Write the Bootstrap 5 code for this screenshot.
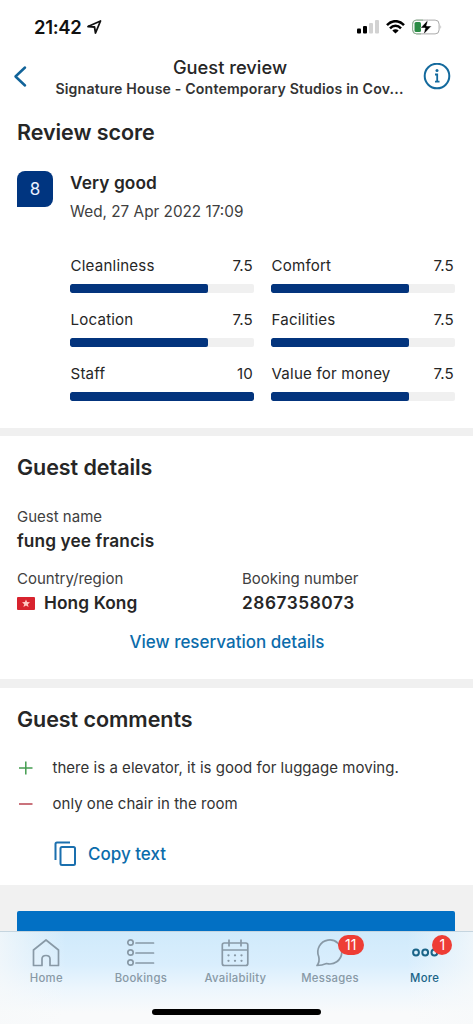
<!DOCTYPE html>
<html lang="en">
<head>
<meta charset="utf-8">
<meta name="viewport" content="width=device-width, initial-scale=1">
<title>Guest review</title>
<link rel="stylesheet" href="https://cdn.jsdelivr.net/npm/bootstrap@5.3.0/dist/css/bootstrap.min.css">
<style>
  body { font-family: Inter, "Liberation Sans", sans-serif; color: #262626; background: #fff; font-size: 15px; line-height: 24px; }
  .screen { height: 1024px; }
  svg { display: block; flex: none; }
  .status { height: 54px; padding: 0 31px 0 34px; color: #111; gap: 7px; }
  .clock { font-size: 18.5px; font-weight: 600; letter-spacing: -.3px; margin-right: -3px; }
  .titlebar { height: 46px; padding: 0 22px 0 13px; }
  .title { font-size: 18.3px; font-weight: 500; line-height: 24px; letter-spacing: 0; padding-left: 1px; }
  .subtitle { font-size: 14.1px; font-weight: 600; line-height: 20px; letter-spacing: .18px; color: #333; }
  .titles { padding-left: 8px; }
  .block { padding: 0 18px 0 17px; }
  .block-score { height: 327.5px; padding-top: 17px; }
  .block-details { height: 243px; padding-top: 16px; }
  .block-comments { height: 197.5px; padding-top: 16px; }
  .heading { font-size: 21.5px; font-weight: 600; line-height: 30px; letter-spacing: -.05px; margin: 0; }
  .score { width: 36px; height: 36px; background: #003580; color: #e8f0ff; border-radius: 8px 8px 8px 0; font-size: 17px; margin-top: 6px; }
  .strong-line { font-size: 17.3px; font-weight: 600; line-height: 26px; letter-spacing: .1px; }
  .date { font-size: 15.3px; line-height: 24px; color: #404040; margin-top: 4px; }
  .scores { margin: 30px 0 0 53px; display: grid; grid-template-columns: 184px 184px; column-gap: 17px; }
  .score-item { height: 54.2px; }
  .score-item .progress { height: 9px; border-radius: 2px; background: #f0f0f0; margin-top: 6px; }
  .score-item .progress-bar { background: #03347d; border-radius: 2px; }
  .score-label { font-size: 15.1px; line-height: 24px; letter-spacing: .2px; padding: 0 1px 0 .5px; }
  .divider { height: 8.5px; background: #f0f0f0; }
  .field { font-size: 15px; line-height: 22px; color: #404040; }
  .booking-no { letter-spacing: .55px; }
  .action { color: #0b6cab; font-weight: 500; text-decoration: none; font-size: 17px; line-height: 26px; }
  .comment { font-size: 15px; line-height: 24px; letter-spacing: .03px; color: #333; gap: 18.5px; }
  .footer-area { height: 139px; background: #f1f1f1; padding-top: 26px; }
  .primary-bar { height: 20px; margin: 0 18px 0 17px; border-radius: 2px 2px 0 0; background: #0270c4; }
  .tabs { height: 93px; border-top: 1px solid #c5d5df; background:
    linear-gradient(90deg, rgba(247,249,250,.75), rgba(247,249,250,0) 14%, rgba(247,249,250,0) 86%, rgba(247,249,250,.75)),
    linear-gradient(#d0eafb, #d9eefd 35%, #edf6fd 62%, #f9fafb 88%); }
  .tab { width: 94.6px; padding-top: 6px; color: #8899a6; font-size: 11.3px; font-weight: 500; line-height: 16px; letter-spacing: .3px; text-align: center; }
  .tab svg { margin: 0 auto 3px; }
  .tab.current { color: #1a6488; }
  .tab-row { margin-left: -1px; }
  .counter { position: absolute; top: 3px; left: 55px; height: 20px; border-radius: 10px; background: #ee3d35; color: #fff; font-size: 14px; line-height: 20px; letter-spacing: 0; font-weight: 400; }
  .home-bar { width: 169px; height: 6px; border-radius: 3px; background: #000; margin: 23px auto 0; }
</style>
</head>
<body>
<div class="screen d-flex flex-column overflow-hidden">
  <div class="status d-flex align-items-center">
    <span class="clock">21:42</span>
    <svg width="17" height="16" viewBox="0 0 17 16" fill="none" stroke="#111" stroke-width="1.8" stroke-linejoin="round"><path d="M2 7.500 14.500 2 9.500 14 8.500 8Z"/></svg>
    <svg class="ms-auto" width="22" height="14" viewBox="0 0 22 14"><rect x="0" y="8.500" width="4" height="5" rx="1"/><rect x="6" y="6" width="4" height="7.500" rx="1"/><rect x="12" y="3" width="4" height="10.500" rx="1" fill="#d2d2d2"/><rect x="18" y="0" width="4" height="13.500" rx="1" fill="#d2d2d2"/></svg>
    <svg width="19" height="14" viewBox="0 0 19 14" fill="none" stroke="#000" stroke-width="2.500"><path d="M1 5.200C6-.2 13-.2 18 5.200M4 8.300c3.200-3.300 7.800-3.300 11 0"/><path d="M9.500 13.500 6.300 10.400c1.900-1.700 4.500-1.700 6.400 0Z" fill="#000" stroke="none"/></svg>
    <svg width="30" height="16" viewBox="0 0 30 16"><rect x=".6" y="1.100" width="26.500" height="13.800" rx="4" fill="#fff" stroke="#aaa"/><path d="M11 1.100H4.600a4 4 0 0 0-4 4v5.800a4 4 0 0 0 4 4H9" fill="none" stroke="#8fb594"/><rect x="2.500" y="3" width="6.500" height="10" rx="1.500" fill="#2c8c46"/><path d="M16 .8 8.500 9h4.700L11.500 15.500 19.500 7h-5Z" fill="#000" stroke="#fff" stroke-width=".5"/><path d="M28.500 6v4q1.500-2 0-4" fill="#aaa"/></svg>
  </div>
  <div class="titlebar d-flex align-items-center">
    <svg width="15" height="24" viewBox="0 0 15 24" fill="none" stroke="#116399" stroke-width="2.500" stroke-linecap="round" stroke-linejoin="round"><path d="M12 2.500 2.500 11.500 12 20.500"/></svg>
    <div class="titles flex-grow-1 text-center text-nowrap">
      <div class="title">Guest review</div>
      <div class="subtitle">Signature House - Contemporary Studios in Cov...</div>
    </div>
    <svg width="28" height="28" viewBox="0 0 28 28"><circle cx="14" cy="13" r="12.300" fill="none" stroke="#146a9d" stroke-width="2"/><circle cx="14" cy="7.500" r="1.500" fill="#146a9d"/><path d="M12 11.500H14.200V18.500M12 18.700h4.500" fill="none" stroke="#146a9d" stroke-width="1.800"/></svg>
  </div>

  <section class="block block-score">
    <h2 class="heading">Review score</h2>
    <div class="d-flex" style="margin-top:18px">
      <div class="score d-flex align-items-center justify-content-center">8</div>
      <div style="margin-left:17px;padding-top:5px">
        <div class="strong-line">Very good</div>
        <div class="date">Wed, 27 Apr 2022 17:09</div>
      </div>
    </div>
    <div class="scores">
      <div class="score-item"><div class="score-label d-flex justify-content-between"><span>Cleanliness</span><span>7.5</span></div><div class="progress"><div class="progress-bar" style="width:75%"></div></div></div>
      <div class="score-item"><div class="score-label d-flex justify-content-between"><span>Comfort</span><span>7.5</span></div><div class="progress"><div class="progress-bar" style="width:75%"></div></div></div>
      <div class="score-item"><div class="score-label d-flex justify-content-between"><span>Location</span><span>7.5</span></div><div class="progress"><div class="progress-bar" style="width:75%"></div></div></div>
      <div class="score-item"><div class="score-label d-flex justify-content-between"><span>Facilities</span><span>7.5</span></div><div class="progress"><div class="progress-bar" style="width:75%"></div></div></div>
      <div class="score-item"><div class="score-label d-flex justify-content-between"><span>Staff</span><span>10</span></div><div class="progress"><div class="progress-bar" style="width:100%"></div></div></div>
      <div class="score-item"><div class="score-label d-flex justify-content-between"><span>Value for money</span><span>7.5</span></div><div class="progress"><div class="progress-bar" style="width:75%"></div></div></div>
    </div>
  </section>
  <div class="divider"></div>

  <section class="block block-details">
    <h2 class="heading">Guest details</h2>
    <div class="field" style="margin-top:24px">Guest name</div>
    <div class="strong-line">fung yee francis</div>
    <div class="d-flex" style="margin-top:14px">
      <div style="width:225px">
        <div class="field">Country/region</div>
        <div class="strong-line d-flex align-items-center">
          <svg style="margin-right:9px" width="18" height="13" viewBox="0 0 18 13"><rect width="18" height="13" rx="1" fill="#d8232e"/><path d="m9 2.500 1.100 2.600 2.900.1-2.200 2 .8 2.800L9 8.500 6.400 10l.8-2.800-2.200-2 2.900-.1Z" fill="#ffc9c4"/></svg>
          <span>Hong Kong</span>
        </div>
      </div>
      <div>
        <div class="field">Booking number</div>
        <div class="strong-line booking-no">2867358073</div>
      </div>
    </div>
    <div class="text-center" style="margin-top:13px;padding-right:18px"><a href="#" class="action">View reservation details</a></div>
  </section>
  <div class="divider"></div>

  <section class="block block-comments">
    <h2 class="heading">Guest comments</h2>
    <div class="comment d-flex align-items-center" style="margin-top:22px">
      <svg width="17" height="16" viewBox="0 0 17 16" stroke="#449d50" stroke-width="1.500"><path d="M2 8H15.500M8.800 1.500V14.500"/></svg>
      <span>there is a elevator, it is good for luggage moving.</span>
    </div>
    <div class="comment d-flex align-items-center" style="margin-top:12px">
      <svg width="17" height="16" viewBox="0 0 17 16" stroke="#b84450" stroke-width="1.500"><path d="M2 8H15.500"/></svg>
      <span>only one chair in the room</span>
    </div>
    <a href="#" class="action d-flex align-items-center" style="margin:25px 0 0 37px">
      <svg width="23" height="26" viewBox="0 0 23 26" fill="none" stroke="#1a6fae" stroke-width="2" stroke-linejoin="round"><rect x="6.500" y="6" width="14.500" height="18" rx="1.500"/><path d="M1.500 19V3q0-1.500 1.500-1.500H16"/></svg>
      <span style="margin-left:11px">Copy text</span>
    </a>
  </section>

  <div class="footer-area">
    <div class="primary-bar"></div>
    <nav class="tabs">
      <div class="tab-row d-flex">
        <div class="tab"><svg width="30" height="29" viewBox="0 0 30 29" fill="none" stroke="currentColor" stroke-width="1.700" stroke-linejoin="round"><path d="M2.500 27.500V12L15 2 27.500 12V27.500H19V21q0-3.500-4-3.500t-4 3.500v6.500Z"/></svg>Home</div>
        <div class="tab"><svg width="30" height="29" viewBox="0 0 30 29" fill="none" stroke="currentColor" stroke-width="1.700"><circle cx="4.500" cy="4.500" r="2.700"/><circle cx="4.500" cy="14.500" r="2.700"/><circle cx="4.500" cy="24.500" r="2.700"/><path d="M10 5H27.500M10 15H27.500M10 25H27.500" stroke-linecap="round"/></svg>Bookings</div>
        <div class="tab"><svg width="30" height="29" viewBox="0 0 30 29" fill="none" stroke="currentColor" stroke-width="1.700"><rect x="2.300" y="5" width="25.500" height="22.500" rx="2"/><path d="M2.300 12H27.800M9 1.500V8.500M21 1.500V8.500"/><path d="M8.500 17.300v.01M15 17.300v.01M21.500 17.300v.01M8.500 22.800v.01M15 22.800v.01M21.500 22.800v.01" stroke-width="2.300" stroke-linecap="round"/></svg>Availability</div>
        <div class="tab position-relative"><svg width="30" height="29" viewBox="0 0 30 29" fill="none" stroke="currentColor" stroke-width="1.700" stroke-linejoin="round"><path d="M2 27.500Q5 24 3.700 18.500A12 12 0 1 1 11.500 25.500Q7 27.500 2 27.500Z"/></svg><span class="counter" style="width:26px">11</span>Messages</div>
        <div class="tab current position-relative"><svg width="30" height="29" viewBox="0 0 30 29" fill="none" stroke="currentColor" stroke-width="2"><circle cx="6" cy="14.500" r="2.900"/><circle cx="15.200" cy="14.500" r="2.900"/><circle cx="24.400" cy="14.500" r="2.900"/></svg><span class="counter" style="width:20px">1</span>More</div>
      </div>
      <div class="home-bar"></div>
    </nav>
  </div>
</div>
<script src="https://cdn.jsdelivr.net/npm/bootstrap@5.3.0/dist/js/bootstrap.bundle.min.js"></script>
</body>
</html>
